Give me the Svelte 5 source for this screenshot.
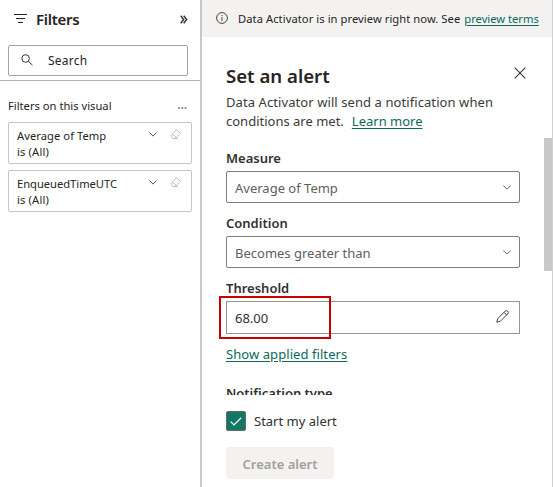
<script>
  const filters = [
    { name: 'Average of Temp', value: 'is (All)', tight: 0.05 },
    { name: 'EnqueuedTimeUTC', value: 'is (All)', tight: -0.03 }
  ];
  const fields = [
    { label: 'Measure', value: 'Average of Temp' },
    { label: 'Condition', value: 'Becomes greater than' }
  ];
</script>

<div class="app">
  <aside>
    <header>
      <svg class="funnel" width="13" height="10" viewBox="0 0 13 10"><path d="M0 .5h13M2 4.5h9M4 8.5h5" stroke="#252423" stroke-width="1.2" /></svg>
      <h2>Filters</h2>
      <svg class="collapse" width="8" height="9" viewBox="0 0 8 9"><path d="M.7.8l3 3.7-3 3.7M3.7.8l3 3.7-3 3.7" fill="none" stroke="#333" stroke-width="1.4" /></svg>
    </header>
    <div class="search">
      <svg width="12" height="12" viewBox="0 0 12 12" fill="none" stroke="#333" stroke-width="1"><circle cx="4.6" cy="4.5" r="3.8" /><path d="M7.3 7.2l4.2 4" /></svg>
      <span>Search</span>
    </div>
    <hr />
    <div class="section">
      <span>Filters on this visual</span>
      <svg width="9" height="2" viewBox="0 0 9 2"><path d="M0 0h2v2H0zM3.3 0h2v2h-2zM6.6 0h2v2h-2z" fill="#999" /></svg>
    </div>
    {#each filters as f}
      <div class="card">
        <div class="card-text">
          <div style:letter-spacing="{f.tight}px">{f.name}</div>
          <div class="val">{f.value}</div>
        </div>
        <svg class="chev" width="8" height="5" viewBox="0 0 8 5"><path d="M.4.5L4 4.1 7.6.5" fill="none" stroke="#3d5266" /></svg>
        <svg class="eraser" width="11" height="11" viewBox="0 0 11 11" fill="none" stroke="#b4b4b4" stroke-width=".9"><path d="M6.6.6l3.8 3.7-5.2 5.1H3L.7 7.1zM2.4 5.2l4 3.2M3 9.6h5" /></svg>
      </div>
    {/each}
  </aside>

  <main>
    <div class="banner">
      <svg width="12" height="12" viewBox="0 0 12 12"><circle cx="6" cy="6" r="5.4" fill="none" stroke="#444" /><path d="M6 5v4M6 3v1.1" stroke="#444" /></svg>
      <span>Data Activator is in preview right now. See</span>
      <a href="#terms">preview terms</a>
    </div>
    <div class="scroll">
      <div class="title">
        <h1>Set an alert</h1>
        <svg width="12" height="12" viewBox="0 0 12 12"><path d="M.7.7l10.6 10.6M11.3.7L.7 11.3" stroke="#333" stroke-width="1.1" /></svg>
      </div>
      <p>
        <span class="wide">Data Activator will send a notification when</span><br />
        conditions are met.<a class="learn" href="#learn">Learn more</a>
      </p>
      {#each fields as f}
        <div class="field">
          <div class="label">{f.label}</div>
          <div class="select">
            <span>{f.value}</span>
            <svg width="8" height="5" viewBox="0 0 8 5"><path d="M.3.6L4 4.1 7.7.6" fill="none" stroke="#666" /></svg>
          </div>
        </div>
      {/each}
      <div class="field">
        <div class="label">Threshold</div>
        <div class="input">
          <span>68.00</span>
          <svg width="13" height="13" viewBox="0 0 13 13" fill="none" stroke="#403e48" stroke-width="1"><path d="M.8 12.2l.9-3.5 7.4-7.4a1.75 1.75 0 0 1 2.6 2.6l-7.4 7.4zM8 2.4l2.6 2.6" /></svg>
          <div class="highlight"></div>
        </div>
      </div>
      <a class="applied" href="#filters">Show applied filters</a>
      <div class="label next">Notification type</div>
      <div class="thumb"></div>
    </div>
    <footer>
      <div class="check">
        <span class="box"><svg width="12" height="9" viewBox="0 0 12 9"><path d="M.7 4.6l3.3 3.3L11.2.8" fill="none" stroke="#fff" stroke-width="1.2" /></svg></span>
        <span>Start my alert</span>
      </div>
      <button disabled>Create alert</button>
    </footer>
  </main>
</div>

<style>
  .app { display: flex; width: 553px; height: 487px; overflow: hidden; background: #fff; font-family: "Noto Sans", "Open Sans", sans-serif; color: #252423; }
  .app, .app * { box-sizing: border-box; }
  svg { display: block; flex: none; }
  h1, h2, p { margin: 0; }
  span, a, h1, h2 { white-space: nowrap; }

  aside { width: 202px; border-right: 2px solid #c8c8c8; font-size: 11.2px; }
  header { display: flex; align-items: center; height: 38px; padding: 0 12px 0 14px; }
  h2 { flex: 1; margin-left: 9px; font-size: 15px; font-weight: 600; line-height: 20px; letter-spacing: -.28px; padding-bottom: 1px; }
  .collapse { margin-right: 0; }
  .search { display: flex; align-items: center; width: 180px; height: 31px; margin: 7px 0 0 8px; padding-left: 12px; border: 1px solid #a6a4a2; border-radius: 2px; }
  .search svg { margin-top: -2px; }
  .search span { margin-left: 15px; font-size: 12px; letter-spacing: .25px; }
  hr { margin: 4px 0 0; border: 0; border-top: 1px solid #b3b0ad; }
  .section { display: flex; align-items: center; justify-content: space-between; height: 16px; margin: 16px 13px 9px 8px; }
  .section svg { margin-top: 5px; }
  .card { display: flex; width: 184px; height: 42px; margin: 0 0 6px 8px; padding: 5px 0 0 8px; border: 1px solid #c8c6c4; border-radius: 2px; line-height: 16px; }
  .card-text { width: 132px; }
  .val { letter-spacing: .15px; }
  .chev { margin-top: 4px; }
  .eraser { margin: 1px 0 0 13px; }

  main { display: flex; flex-direction: column; width: 351px; border-right: 1px solid #d0d0d0; }
  .banner { display: flex; align-items: center; height: 37px; padding-left: 14px; background: #f3f2f1; font-size: 11.2px; letter-spacing: .06px; }
  .banner svg { margin-top: -1px; }
  .banner span { margin-left: 10px; padding-bottom: 1px; }
  .banner a { margin-left: 4px; padding-bottom: 1px; letter-spacing: 0; }
  a { color: #0b6a5b; text-decoration: underline; text-underline-offset: 2px; }
  .scroll { position: relative; height: 358px; padding: 26px 32px 0 24px; overflow: hidden; font-size: 13px; }
  .title { display: flex; justify-content: space-between; height: 30px; }
  .title svg { margin: 4px -6px 0 0; }
  h1 { font-size: 18.6px; font-weight: 600; line-height: 26px; }
  p { line-height: 19px; color: #3b3a39; }
  .wide { letter-spacing: .08px; }
  .learn { margin-left: 8px; }
  .field { margin-top: 10px; }
  p + .field { margin-top: 17px; }
  .label { height: 20px; margin-bottom: 3px; font-weight: 600; line-height: 20px; color: #323130; }
  .select { display: flex; align-items: center; justify-content: space-between; height: 32px; padding: 1px 8px 0; border: 1px solid #7f7d7b; border-radius: 2px; color: #605e5c; }
  .select svg { margin-top: 0; }
  .input { position: relative; display: flex; align-items: center; justify-content: space-between; height: 33px; padding: 0 10px 0 8px; border: 1px solid #979593; color: #323130; }
  .input svg { margin-top: -3px; }
  .highlight { position: absolute; left: -8px; top: -6px; width: 112px; height: 43px; border: 2px solid #c80000; }
  .applied { display: block; width: max-content; margin-top: 10px; line-height: 20px; letter-spacing: .07px; }
  .next { margin-top: 19px; }
  .thumb { position: absolute; right: 0; top: 101px; width: 8px; height: 133px; background: #c8c8c8; }

  footer { padding: 16px 0 0 24px; font-size: 13px; }
  .check { display: flex; align-items: center; gap: 8px; color: #323130; }
  .box { display: flex; align-items: center; justify-content: center; width: 20px; height: 20px; background: #117865; border: 1px solid #6b6967; border-radius: 2px; }
  button { display: block; width: 108px; height: 32px; margin-top: 16px; padding: 1px 0 0; border: 0; border-radius: 4px; background: #f3f2f1; color: #a19f9d; font: 600 13px "Noto Sans", sans-serif; }
</style>
